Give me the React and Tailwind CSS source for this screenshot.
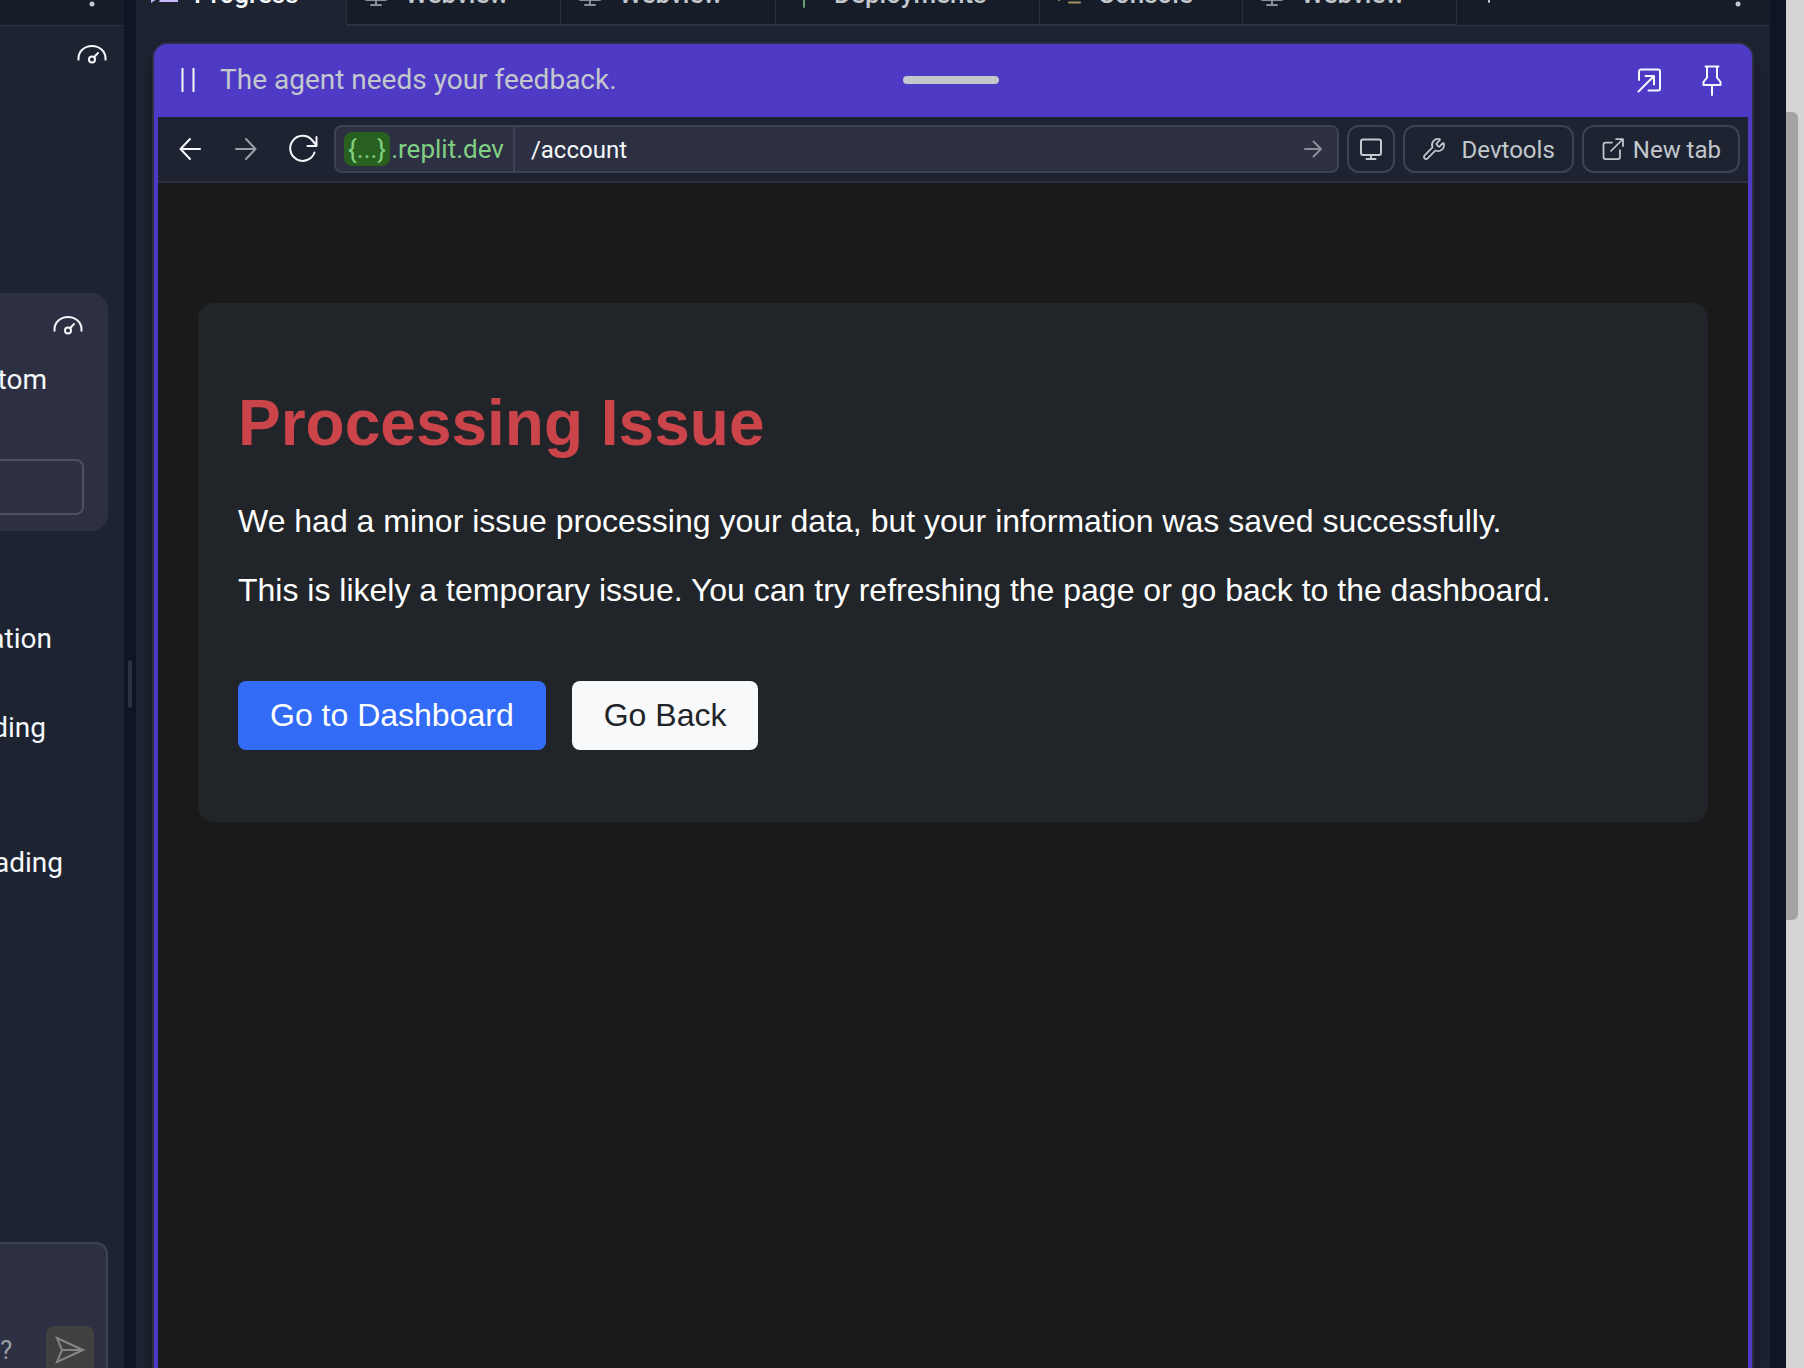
import React from "react";

const stroke = {
  fill: "none",
  stroke: "currentColor",
  strokeLinecap: "round",
  strokeLinejoin: "round",
};

function Icon({ w, h, sw = 2, className = "", children }) {
  return (
    <svg
      width={w}
      height={h}
      viewBox={`0 0 ${w} ${h}`}
      className={`shrink-0 ${className}`}
      aria-hidden="true"
      strokeWidth={sw}
      {...stroke}
    >
      {children}
    </svg>
  );
}

const Gauge = () => (
  <Icon w={30} h={20} className="text-[#f5f9fc]">
    <path d="M1.5 16.5v-2.2C1.5 7.4 7.5 2 15 2s13.500 5.400 13.500 12.300v2.200" strokeLinecap="butt" />
    <circle cx="15" cy="15.500" r="3" />
    <path d="M17 13.300l4-4.300" />
  </Icon>
);

function Tab({ label, icon, active = false, width }) {
  return (
    <button
      type="button"
      role="tab"
      aria-selected={active}
      className={`flex h-full shrink-0 items-end gap-4 overflow-hidden text-[26px]/8 font-medium ${width} ${
        active
          ? "border-r border-[#2c3042] pl-[14px] pb-4 text-[#f5f9fc]"
          : "border-r border-b-2 border-[#2c3042] bg-[#171c29] pb-[14px] pl-4 text-[#c2c8cc]"
      }`}
    >
      {icon}
      <span>{label}</span>
    </button>
  );
}

const TabMonitor = () => (
  <Icon w={26} h={26} className="mb-[3px] text-[#8a9097]">
    <rect x="2" y="2" width="22" height="17" rx="2" />
    <path d="M13 19v5M8 24h10" />
  </Icon>
);

const ProgressIcon = () => (
  <svg width="28" height="30" viewBox="0 0 28 30" className="mb-[7px] shrink-0" fill="#c4b8f8" aria-hidden="true">
    <path d="M1 8h6v18l-6 4zM12 22h16v7H9z" />
  </svg>
);

const DeployIcon = () => (
  <Icon w={26} h={28} className="mb-px text-[#5fa073]">
    <path d="M12 4v22M18 10v8M6 10v8" />
  </Icon>
);

const ConsoleIcon = () => (
  <Icon w={26} h={24} className="text-[#a3945f]">
    <path d="M3 2l6 6-6 6M13 16.500h11" />
  </Icon>
);

const Dots = () => (
  <svg width="6" height="24" viewBox="0 0 6 24" className="shrink-0" fill="#c2c8cc" aria-hidden="true">
    <circle cx="3" cy="3" r="2.500" />
    <circle cx="3" cy="12" r="2.500" />
    <circle cx="3" cy="21" r="2.500" />
  </svg>
);

function Sidebar() {
  return (
    <aside className="flex w-31 shrink-0 flex-col overflow-hidden bg-[#1e2332] text-[28px]/9 text-[#f5f9fc]">
      <div className="flex h-[26px] shrink-0 items-end justify-end overflow-hidden border-b border-[#2c3042] bg-[#171c29] pr-[29px] pb-[18px]">
        <button type="button" aria-label="More options">
          <Dots />
        </button>
      </div>
      <div className="flex justify-end pt-[18px] pr-[17px]">
        <Gauge />
      </div>
      <section className="mt-[229px] mr-4 rounded-r-2xl bg-[#2c3042] pb-4">
        <div className="flex justify-end pt-[22px] pr-[25px]">
          <Gauge />
        </div>
        <p className="mt-[27px] flex w-[47px] justify-end">tom</p>
        <div className="mt-[61px] mr-6 h-14 rounded-r-lg border-2 border-l-0 border-[#4d5164]" />
      </section>
      <p className="mt-[90px] flex w-[52px] justify-end">ation</p>
      <p className="mt-[53px] flex w-[46px] justify-end">ding</p>
      <p className="mt-[99px] flex w-[63px] justify-end">ading</p>
      <form className="mt-auto mr-4 flex h-[126px] items-end justify-between rounded-tr-xl border-t-2 border-r-2 border-[#3e4256] bg-[#2c3042] pr-3">
        <span className="text-[26px]/9">
          <span className="text-[#9a9fa6]">?</span>
        </span>
        <button
          type="button"
          aria-label="Send"
          className="flex h-[42px] w-12 items-start justify-center rounded-t-lg bg-[#404040] pt-[10px] text-[#858585]"
        >
          <Icon w={30} h={28}>
            <path d="M2 2l26 12L2 26l5-12zM7 14h21" strokeLinejoin="miter" />
          </Icon>
        </button>
      </form>
    </aside>
  );
}

function TabStrip() {
  return (
    <div role="tablist" className="flex h-[26px] shrink-0 overflow-hidden">
      <Tab active label="Progress" width="w-[211px]" icon={<ProgressIcon />} />
      <Tab label="Webview" width="w-[214px]" icon={<TabMonitor />} />
      <Tab label="Webview" width="w-[215px]" icon={<TabMonitor />} />
      <Tab label="Deployments" width="w-[264px]" icon={<DeployIcon />} />
      <Tab label="Console" width="w-[203px]" icon={<ConsoleIcon />} />
      <Tab label="Webview" width="w-[214px]" icon={<TabMonitor />} />
      <div className="flex grow items-end justify-between border-b border-[#2c3042] bg-[#171c29] pr-[29px] pl-5">
        <button type="button" aria-label="New tab" className="mb-[22px] text-[#c2c8cc]">
          <Icon w={24} h={24}>
            <path d="M12 1v22M1 12h22" />
          </Icon>
        </button>
        <button type="button" aria-label="More options" className="mb-[18px]">
          <Dots />
        </button>
      </div>
    </div>
  );
}

function AgentBar() {
  return (
    <div className="grid h-[73px] shrink-0 grid-cols-[1fr_auto_1fr] items-center bg-[#4f3ac5] pr-[30px] pb-px pl-[26px]">
      <div className="flex items-center gap-6">
        <Icon w={16} h={26} className="text-[#f5f9fc]">
          <path d="M2.500 1v24M13.500 1v24" strokeLinecap="butt" />
        </Icon>
        <p className="text-[28px]/9 text-[#c2c8cc]">The agent needs your feedback.</p>
      </div>
      <div className="h-2 w-24 rounded-full bg-[#c2c8cc]" />
      <div className="flex items-center justify-end gap-10 text-[#f5f9fc]">
        <button type="button" aria-label="Expand">
          <Icon w={26} h={26}>
            <path d="M3 13V4.500a2 2 0 0 1 2-2h17a2 2 0 0 1 2 2v17a2 2 0 0 1-2 2H12.500M2.500 24.500L18 9M9.500 9H18v8.500" />
          </Icon>
        </button>
        <button type="button" aria-label="Pin">
          <Icon w={20} h={32}>
            <path d="M3.500 2.500h13M5 2.500v11L1.500 18v3h17v-3L15 13.500v-11M10 21v10" />
          </Icon>
        </button>
      </div>
    </div>
  );
}

function BrowserBar() {
  const outlined = "flex h-12 shrink-0 items-center rounded-xl border-2 border-[#3e4256]";
  return (
    <div className="flex h-[66px] shrink-0 items-center gap-2 border-b-2 border-[#2c3042] bg-[#1e2332] pr-2 pl-5 text-2xl/8 text-[#c2c8cc]">
      <div className="mr-2 flex shrink-0 items-center gap-[31px]">
        <button type="button" aria-label="Back" className="text-[#f5f9fc]">
          <Icon w={24} h={24}>
            <path d="M22 12H3M12 2L2.500 12 12 22" />
          </Icon>
        </button>
        <button type="button" aria-label="Forward" className="text-[#9a9fa6]">
          <Icon w={24} h={24}>
            <path d="M3 12h19M13 2l9.500 10L13 22" />
          </Icon>
        </button>
        <button type="button" aria-label="Reload" className="text-[#f5f9fc]">
          <Icon w={30} h={30}>
            <path d="M26.500 18.500A12.500 12.500 0 1 1 24 6l4.500 5.500M28.500 3v9h-9" />
          </Icon>
        </button>
      </div>
      <div className="flex h-12 min-w-0 grow items-stretch rounded-lg border-2 border-[#3e4256] bg-[#2c3042]">
        <div className="flex items-center border-r-2 border-[#3e4256] px-2 text-[26px]/8 text-[#81cf82]">
          <span className="rounded-lg bg-[#28601f] px-1 py-px">{"{...}"}</span>
          <span className="px-px">.replit.dev</span>
        </div>
        <input
          type="text"
          aria-label="Path"
          defaultValue="/account"
          className="min-w-0 grow bg-transparent px-4 pt-0.5 text-[#f5f9fc] outline-none"
        />
        <button type="button" aria-label="Go" className="pr-[14px] text-[#8a9097]">
          <Icon w={20} h={20}>
            <path d="M2 10h15M10.500 2.500L18 10l-7.500 7.500" />
          </Icon>
        </button>
      </div>
      <button type="button" aria-label="Device size" className={`${outlined} w-12 justify-center`}>
        <Icon w={24} h={24}>
          <rect x="2" y="2.500" width="20" height="15.500" rx="2" />
          <path d="M12 18v4M7.500 22h9" />
        </Icon>
      </button>
      <button type="button" className={`${outlined} gap-4 px-[17px]`}>
        <Icon w={24} h={24} sw={1.75}>
          <path d="M14.700 6.300a1 1 0 0 0 0 1.400l1.600 1.600a1 1 0 0 0 1.400 0l3.106-3.105c.32-.322.863-.22.983.218a6 6 0 0 1-8.259 7.057l-7.910 7.910a1 1 0 0 1-2.999-3l7.910-7.910a6 6 0 0 1 7.057-8.259c.438.12.54.662.219.984z" />
        </Icon>
        <span className="pt-0.5">Devtools</span>
      </button>
      <button type="button" className={`${outlined} gap-2 px-[17px]`}>
        <Icon w={24} h={24} sw={1.75}>
          <path d="M11 5.500H4.500a2 2 0 0 0-2 2v12.500a2 2 0 0 0 2 2H17a2 2 0 0 0 2-2V13M10 14L21.500 2.500M15 2h7v7" />
        </Icon>
        <span className="pt-0.5">New tab</span>
      </button>
    </div>
  );
}

function ErrorPage() {
  return (
    <main className="grow bg-[#1a1a1a] px-10 pt-30 font-['Liberation_Sans',Arial,sans-serif] text-[32px]/[37px] text-white">
      <section className="rounded-2xl bg-[#212529] px-10 pt-[83px] pb-18">
        <h1 className="text-[64px]/[74px] font-bold text-[#cb444a]">Processing Issue</h1>
        <p className="mt-[43px]">
          We had a minor issue processing your data, but your information was saved successfully.
        </p>
        <p className="mt-8">
          This is likely a temporary issue. You can try refreshing the page or go back to the dashboard.
        </p>
        <div className="mt-18 flex gap-[26px]">
          <a href="#dashboard" className="rounded-lg bg-[#326cf6] px-8 py-4">
            Go to Dashboard
          </a>
          <a href="#back" className="rounded-lg bg-[#f8f9fa] px-8 py-4 text-[#212529]">
            Go Back
          </a>
        </div>
      </section>
    </main>
  );
}

export default function App() {
  return (
    <div className="flex h-screen overflow-hidden bg-[#0f1524] font-['Roboto',sans-serif]">
      <Sidebar />
      <div className="flex w-3 shrink-0 items-center justify-center">
        <div className="h-12 w-1 rounded-full bg-[#2c3042]" />
      </div>
      <div className="flex min-w-0 grow flex-col bg-[#1e2332]">
        <TabStrip />
        <div className="flex grow flex-col px-4 pt-4">
          <div className="flex grow flex-col overflow-hidden rounded-t-2xl border-2 border-b-0 border-[#2c3042] bg-[#4f3ac5] shadow-[0_8px_16px_rgba(2,2,3,0.32)]">
            <AgentBar />
            <div className="mx-1 flex grow flex-col">
              <BrowserBar />
              <ErrorPage />
            </div>
          </div>
        </div>
      </div>
      <div className="w-4 shrink-0" />
      <div className="w-[18px] shrink-0 bg-[#d4d4d4] pt-28">
        <div className="h-[808px] w-3 rounded-r-md bg-[#a3a3a3]" />
      </div>
    </div>
  );
}
